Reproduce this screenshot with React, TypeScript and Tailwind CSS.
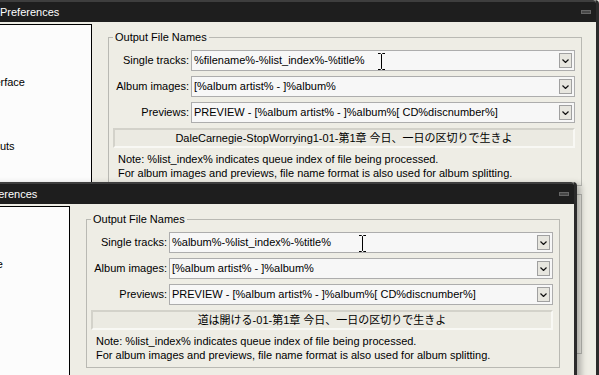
import React from "react";

type TreeItem = { label: string; level: "root" | "child" };

const tree: TreeItem[] = [
  { label: "Components", level: "root" },
  { label: "Display", level: "root" },
  { label: "Columns UI", level: "child" },
  { label: "Default User Interface", level: "root" },
  { label: "Context Menu", level: "root" },
  { label: "Playback", level: "root" },
  { label: "Output", level: "child" },
  { label: "Keyboard Shortcuts", level: "root" },
  { label: "Media Library", level: "root" },
  { label: "Networking", level: "root" },
  { label: "Tools", level: "root" },
  { label: "Converter", level: "child" },
  { label: "Advanced", level: "root" },
];

const Chevron = () => (
  <svg width="7" height="4" viewBox="0 0 7 4" className="block">
    <path d="M0.5 0.5 L3.5 3.5 L6.5 0.5" stroke="#111" strokeWidth="1.2" fill="none" />
  </svg>
);

const IBeam = () => (
  <svg width="9" height="17" viewBox="0 0 9 17" className="block">
    <path d="M1 0.5 H3.5 L4.5 1.5 L5.5 0.5 H8 M4.5 1.5 V15.5 M1 16.5 H3.5 L4.5 15.5 L5.5 16.5 H8" stroke="#000" strokeWidth="1" fill="none" />
  </svg>
);

function Field({ label, value }: { label: string; value: string }) {
  return (
    <>
      <span className="self-center text-right whitespace-nowrap">{label}</span>
      <div className="flex h-[21px] items-center border border-[#adadad] bg-[#f7f7f7] pl-[2px]">
        <span className="flex-1 whitespace-nowrap">{value}</span>
        <span className="mr-[2px] flex h-[15px] w-[13px] items-center justify-center border border-[#a0a0a0] bg-[#e7e6df]">
          <Chevron />
        </span>
      </div>
    </>
  );
}

type WindowProps = {
  className: string;
  single: string;
  preview: string;
  cursor: string;
  rows: number;
};

function PrefsWindow({ className, single, preview, cursor, rows }: WindowProps) {
  return (
    <div
      className={`absolute flex h-[430px] w-[709px] flex-col rounded-t-[4px] border-x-[3px] border-b-[3px] border-[#2b2b2b] bg-[#eeede5] ${className}`}
    >
      <div className="flex h-[22px] items-center rounded-t-[3px] border-t-2 border-[#3e3e3e] bg-[#1e1e1e] pr-[5px] pl-[107px] text-[11px] text-white">
        <span className="flex-1">Preferences</span>
        <span className="h-[4px] w-[10px] border border-[#666] bg-[#474747]" />
      </div>

      <div className="flex items-start gap-[16px] pt-[2px] pr-[14px] pl-[8px]">
        <div className="h-[400px] w-[191px] shrink-0 border border-black bg-[#fcfcfc] pt-[1px]">
          {tree.slice(0, rows).map((t) => (
            <div
              key={t.label}
              className={`flex h-[16px] items-center whitespace-nowrap ${t.level === "root" ? "pl-[16px]" : "pl-[32px]"}`}
            >
              {t.label}
            </div>
          ))}
        </div>

        <div className="flex flex-1 flex-col gap-[8px] pt-[6px]">
          <fieldset className="border border-[#b9b9b3] pr-[6px] pb-[5px] pl-[4px]">
            <legend className="px-[2px] leading-[14px]">Output File Names</legend>
            <div className="mt-[6px] grid grid-cols-[76px_1fr] gap-x-[2px] gap-y-[5px]">
              <Field label="Single tracks:" value={single} />
              <Field label="Album images:" value="[%album artist% - ]%album%" />
              <Field label="Previews:" value="PREVIEW - [%album artist% - ]%album%[ CD%discnumber%]" />
              <div className="col-span-2 flex h-[20px] items-center justify-center border-2 border-t-[#d3d2ca] border-r-[#f8f8f4] border-b-[#f8f8f4] border-l-[#d3d2ca] bg-[#ebeae2] whitespace-nowrap">
                {preview}
              </div>
            </div>
            <div className="mt-[4px] pl-[5px] leading-[14px]">
              <p>Note: %list_index% indicates queue index of file being processed.</p>
              <p>For album images and previews, file name format is also used for album splitting.</p>
            </div>
          </fieldset>

          <div className="h-[160px] border border-[#b9b9b3]" />
        </div>
      </div>

      <div className={`absolute top-[53px] ${cursor}`}>
        <IBeam />
      </div>
    </div>
  );
}

export default function App() {
  return (
    <div className="relative h-[375px] w-[599px] overflow-hidden bg-[#eeede5] font-['Liberation_Sans','Noto_Sans_CJK_JP',sans-serif] text-[11px] text-black">
      <PrefsWindow
        className="top-0 left-[-110px]"
        single="%filename%-%list_index%-%title%"
        preview="DaleCarnegie-StopWorrying1-01-第1章 今日、一日の区切りで生きよ"
        cursor="left-[484px]"
        rows={10}
      />
      <PrefsWindow
        className="top-[182px] left-[-132px] shadow-[4px_2px_6px_rgba(0,0,0,0.28)]"
        single="%album%-%list_index%-%title%"
        preview="道は開ける-01-第1章 今日、一日の区切りで生きよ"
        cursor="left-[487px]"
        rows={13}
      />
    </div>
  );
}
